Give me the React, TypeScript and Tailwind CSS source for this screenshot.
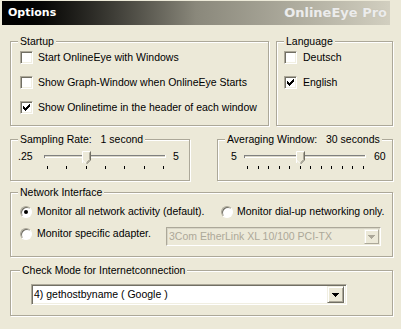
import React from 'react';

const Check = ({ checked }: { checked?: boolean }) => (
  <span className="flex h-[13px] w-[13px] shrink-0 items-center justify-center border border-t-[#aca899] border-l-[#aca899] border-b-white border-r-white bg-white shadow-[inset_1px_1px_0_#716f64,inset_-1px_-1px_0_#f1efe2]">
    {checked && (
      <svg width="7" height="7" viewBox="0 0 7 7" shapeRendering="crispEdges">
        <path
          d="M0 2h1v3H0z M1 3h1v3H1z M2 4h1v3H2z M3 3h1v3H3z M4 2h1v3H4z M5 1h1v3H5z M6 0h1v3H6z"
          fill="#000"
        />
      </svg>
    )}
  </span>
);

const Radio = ({ on }: { on?: boolean }) => (
  <span className="flex h-[12px] w-[12px] shrink-0 items-center justify-center rounded-full border border-t-[#aca899] border-l-[#aca899] border-b-white border-r-white bg-white shadow-[inset_1px_1px_0_#716f64]">
    {on && <span className="h-[4px] w-[4px] rounded-full bg-black" />}
  </span>
);

const Slider = ({ ticks, thumb }: { ticks: number; thumb: number }) => (
  <svg width="126" height="18" className="shrink-0">
    <g shapeRendering="crispEdges">
      <rect x="1" y="4" width="122" height="1" fill="#808080" />
      <rect x="1" y="5" width="122" height="1" fill="#d8d5c6" />
      <rect x="1" y="6" width="122" height="1" fill="#ffffff" />
      <rect x="1" y="4" width="1" height="3" fill="#808080" />
      <rect x="122" y="4" width="1" height="3" fill="#ffffff" />
      {Array.from({ length: ticks }).map((_, i) => (
        <rect key={i} x={4 + Math.round((i * 116) / (ticks - 1))} y="15" width="1" height="3" fill="#000" />
      ))}
    </g>
    <g transform={`translate(${thumb} 0)`}>
      <path d="M0.5 0.5H8.5V9L4.5 13L0.5 9Z" fill="#ece9d8" />
      <path d="M8.5 0.5V9L4.5 13" stroke="#716f64" fill="none" />
      <path d="M7.5 1.5V8.6L4.5 11.6" stroke="#aca899" fill="none" />
      <path d="M0.5 12V0.5H8" stroke="#ffffff" fill="none" />
      <path d="M0.5 9L4 12.5" stroke="#ffffff" fill="none" />
    </g>
  </svg>
);

const Arrow = ({ color }: { color: string }) => (
  <svg width="7" height="4" viewBox="0 0 7 4" shapeRendering="crispEdges">
    <path d="M0 0h7v1H0z M1 1h5v1H1z M2 2h3v1H2z M3 3h1v1H3z" fill={color} />
  </svg>
);

const Group = ({
  title,
  className,
  legendClass = 'ml-[7px]',
  children,
}: {
  title: string;
  className: string;
  legendClass?: string;
  children: React.ReactNode;
}) => (
  <div className={`border border-[#aca899] shadow-[1px_1px_0_#fff,inset_1px_1px_0_#fff] ${className}`}>
    <div className={`-mt-[7px] w-fit bg-[#ece9d8] px-[2px] leading-[13px] whitespace-pre ${legendClass}`}>{title}</div>
    {children}
  </div>
);

const App: React.FC = () => {
  return (
    <div className="h-[329px] w-[401px] overflow-hidden bg-[#ece9d8] font-['Liberation_Sans',Arial,sans-serif] text-[10.5px] text-black">
      <div className="ml-[2px] mt-[1px] flex h-[24px] w-[388px] items-center justify-between bg-gradient-to-r from-black via-[#8a887b] to-[#d2cfc0] pl-[6px] pr-[3px]">
        <span className="font-['DejaVu_Sans',sans-serif] text-[11px] font-bold text-white">Options</span>
        <span className="whitespace-nowrap font-['DejaVu_Sans',sans-serif] text-[13px] font-bold text-[#ececec] [text-shadow:0_0_1px_#b8b5a6]">
          OnlineEye Pro
        </span>
      </div>

      <div className="pl-[10px] pr-[8px]">
        <div className="mt-[16px] flex gap-[7px]">
          <Group title="Startup" className="h-[85px] w-[259px]">
            <div className="mt-[3px] flex flex-col gap-[12px] pl-[9px]">
              <div className="flex h-[13px] items-center gap-[5px] leading-[13px]">
                <Check />
                Start OnlineEye with Windows
              </div>
              <div className="flex h-[13px] items-center gap-[5px] leading-[13px]">
                <Check />
                Show Graph-Window when OnlineEye Starts
              </div>
              <div className="flex h-[13px] items-center gap-[5px] leading-[13px]">
                <Check checked />
                Show Onlinetime in the header of each window
              </div>
            </div>
          </Group>
          <Group title="Language" className="h-[85px] w-[117px]">
            <div className="mt-[3px] flex flex-col gap-[12px] pl-[7px]">
              <div className="flex h-[13px] items-center gap-[6px] leading-[13px]">
                <Check />
                Deutsch
              </div>
              <div className="flex h-[13px] items-center gap-[6px] leading-[13px]">
                <Check checked />
                English
              </div>
            </div>
          </Group>
        </div>

        <div className="mt-[13px] flex gap-[27px]">
          <Group title="Sampling Rate:   1 second" className="h-[42px] w-[180px]">
            <div className="mt-[5px] flex items-start pl-[7px]">
              <span className="w-[25px] leading-[11px]">.25</span>
              <Slider ticks={7} thumb={39} />
              <span className="ml-[4px] leading-[11px]">5</span>
            </div>
          </Group>
          <Group title="Averaging Window:   30 seconds" className="h-[42px] w-[176px]">
            <div className="mt-[5px] flex items-start pl-[13px]">
              <span className="w-[12px] leading-[11px]">5</span>
              <Slider ticks={12} thumb={53} />
              <span className="ml-[5px] leading-[11px]">60</span>
            </div>
          </Group>
        </div>

        <Group title="Network Interface" className="mt-[11px] h-[65px] w-[383px]">
          <div className="mt-[6px] flex flex-col gap-[9px] pl-[9px]">
            <div className="flex h-[13px] items-center leading-[13px]">
              <div className="flex w-[201px] items-center gap-[5px]">
                <Radio on />
                Monitor all network activity (default).
              </div>
              <div className="flex items-center gap-[4px]">
                <Radio />
                Monitor dial-up networking only.
              </div>
            </div>
            <div className="flex items-start">
              <div className="flex h-[13px] w-[146px] items-center gap-[5px] leading-[13px]">
                <Radio />
                Monitor specific adapter.
              </div>
              <div className="flex h-[19px] w-[215px] items-center border border-t-[#aca899] border-l-[#aca899] border-b-white border-r-white bg-[#ece9d8] shadow-[inset_1px_1px_0_#d8d5c6]">
                <span className="flex-1 pl-[2px] leading-[13px] text-[#aca899]">3Com EtherLink XL 10/100 PCI-TX</span>
                <span className="mr-[1px] flex h-[15px] w-[15px] items-center justify-center border border-t-[#f1efe2] border-l-[#f1efe2] border-b-[#aca899] border-r-[#aca899] shadow-[inset_1px_1px_0_#fff]">
                  <Arrow color="#aca899" />
                </span>
              </div>
            </div>
          </div>
        </Group>

        <Group title="Check Mode for Internetconnection" legendClass="ml-[9px]" className="mt-[13px] h-[46px] w-[383px]">
          <div className="mt-[7px] pl-[20px]">
            <div className="flex h-[21px] w-[316px] items-center border border-t-[#aca899] border-l-[#aca899] border-b-white border-r-white bg-white shadow-[inset_1px_1px_0_#716f64,inset_-1px_-1px_0_#f1efe2]">
              <span className="flex-1 pl-[2px] leading-[13px]">4) gethostbyname ( Google )</span>
              <span className="mr-[2px] flex h-[17px] w-[17px] items-center justify-center border border-t-[#f1efe2] border-l-[#f1efe2] border-b-[#716f64] border-r-[#716f64] bg-[#ece9d8] shadow-[inset_1px_1px_0_#fff,inset_-1px_-1px_0_#aca899]">
                <Arrow color="#000" />
              </span>
            </div>
          </div>
        </Group>
      </div>
    </div>
  );
};

export default App;
